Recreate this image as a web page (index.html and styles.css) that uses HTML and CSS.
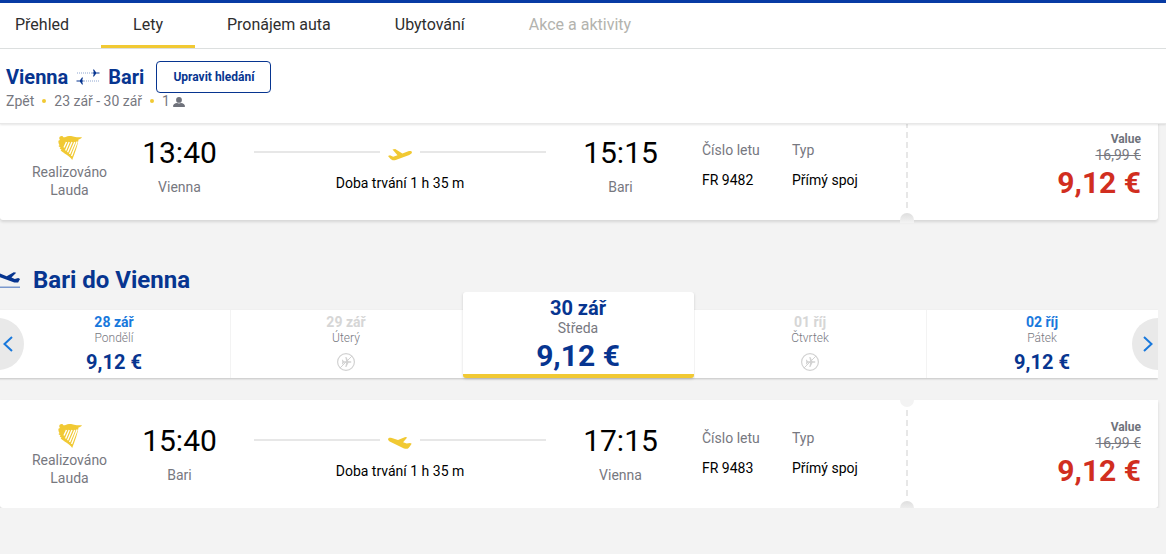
FILE: index.html
```
<!DOCTYPE html>
<html lang="cs">
<head>
<meta charset="utf-8">
<title>Lety Vienna – Bari</title>
<link rel="stylesheet" href="styles.css">
</head>
<body>
<svg class="sprites" aria-hidden="true">
  <symbol id="harp" viewBox="0 0 24 24">
    <path fill="currentColor" d="M2 .6C3.200-.4 5-.1 5.300 1.300 7.300 1.500 8.600.2 11 0c3.500-.2 5.500 1.600 13 1.300-1 1.400-2.200 1.900-3.500 2.300-.8 5.500-3.400 13.400-6.300 20.400C12 20 5.500 17.500 2.600 14.300l1-.6-2-1.100 1-.9L.4 9.900l1.100-.7C.5 7.500 0 5.700.7 4.500L2 3.900C1.100 3 .9 1.600 2 .6Z"/>
    <path fill="none" stroke="#fff" stroke-width="1.400" d="M8.500 6 6 11.500M11.200 6 7.600 14.500M14 6 9.600 16.200M16.800 6 11.600 18M19.200 5.600 13.600 20"/>
  </symbol>
  <symbol id="plane-up" viewBox="0 0 24 12">
    <path fill="currentColor" d="M4.500.6 7.200.1l7.200 4.400 5.900-2.200c1.700-.6 3.300-.2 3.600.7.300 1-.9 2.200-2.600 2.900L8.400 10.800c-1.800.7-3.500.7-4.300.3L2.600 10 0 6.900l2-.7 3.200 1.500 4.300-1.400Z"/>
  </symbol>
  <symbol id="plane-down" viewBox="0 0 24 12">
    <path fill="currentColor" d="M.1 1.900C.4.900 2 .5 3.800 1.100l6.200 2L17.300.1l1.900.3-4.100 4.800 3.600 1.200L22.100 6l1.600.7-2.300 3.200-1.100 1.300c-.9.8-2.500.8-4.300.2L2.700 5C1.100 4.300-.2 3 .1 1.900Z"/>
  </symbol>
  <symbol id="no-flight" viewBox="0 0 18 18">
    <g fill="none" stroke="currentColor"><circle cx="9" cy="9" r="8.400" stroke-width="1.200"/><path d="M3 15 15 3"/></g>
    <path fill="currentColor" d="m8.300 4 1.100.1 2.100 4.100 2.100.1c1 .2 1 1.200 0 1.400l-2.100.1-2.100 4.100-1.100.1.900-4.200-2.300-.1-1.200 1.600-.8.100.4-2.400-.4-2.400.8.100 1.200 1.600 2.300-.1Z"/>
  </symbol>
</svg>

<header class="header">
  <nav class="tabs">
    <a class="tab" href="#prehled">Přehled</a>
    <a class="tab tab--active" href="#lety" aria-current="page">Lety</a>
    <a class="tab" href="#auta">Pronájem auta</a>
    <a class="tab" href="#ubytovani">Ubytování</a>
    <a class="tab tab--disabled" aria-disabled="true">Akce a aktivity</a>
  </nav>
  <div class="search">
    <div class="search-route">
      <span class="city">Vienna</span>
      <svg class="swap" viewBox="0 0 24 16" aria-hidden="true">
        <path d="M1 4h17M6 12h17" fill="none" stroke="#8fa6d0" stroke-dasharray="1 1"/>
        <path d="m17 .5 1 .1L20.200 3.500l3.300.1v.8l-3.300.1L18 7.400l-1 .1.900-3h-1.400v-1h1.400ZM7 8.500l-1 .1-2.200 2.900-3.300.1v.8l3.300.1L6 15.400l1 .1-.9-3h1.400v-1H6.100Z" fill="#073590"/>
      </svg>
      <span class="city">Bari</span>
      <button class="edit" type="button">Upravit hledání</button>
    </div>
    <div class="search-info">
      <span>Zpět</span><i class="dot"></i><span>23 zář - 30 zář</span><i class="dot"></i>
      <span class="pax">1 <svg class="person" viewBox="0 0 12 10" aria-hidden="true"><circle cx="6" cy="2.900" r="2.900"/><path d="M0 9.200C0 7.300 1.900 6.300 4 6c1.300.6 2.700.6 4 0 2.100.3 4 1.300 4 3.200 0 .6-.4.8-1 .8H1c-.6 0-1-.2-1-.8Z"/></svg></span>
    </div>
  </div>
</header>

<main class="results">
  <article class="flight">
    <div class="details">
      <div class="airline"><svg class="harp"><use href="#harp"/></svg>Realizováno<br>Lauda</div>
      <div class="stop"><time class="time">13:40</time><span class="place">Vienna</span></div>
      <div class="journey">
        <div class="line"><svg class="plane"><use href="#plane-up"/></svg></div>
        <span class="duration">Doba trvání 1 h 35 m</span>
      </div>
      <div class="stop"><time class="time">15:15</time><span class="place">Bari</span></div>
      <dl class="facts">
        <div class="fact"><dt>Číslo letu</dt><dd>FR 9482</dd></div>
        <div class="fact"><dt>Typ</dt><dd>Přímý spoj</dd></div>
      </dl>
    </div>
    <div class="fare">
      <i class="perforation"></i>
      <span class="fare-name">Value</span>
      <s class="old-price">16,99 €</s>
      <strong class="price">9,12 €</strong>
    </div>
  </article>

  <h2 class="heading">
    <svg class="landing" viewBox="0 0 22 16" aria-hidden="true">
      <path fill="#073590" d="M0 1.200 7 4.200 14.500 0l2.500.4-5 5.100 3.500 1.400 3.600-1.100L21 7l-2 3.500h-4L0 5Z"/>
      <path fill="#3564b8" d="M0 15h21v1H0z"/>
    </svg>
    Bari do Vienna
  </h2>

  <div class="carousel">
    <button class="arrow arrow--prev" type="button" aria-label="Předchozí dny"><svg class="chevron" viewBox="0 0 10 16"><path d="M9 1 1.500 8 9 15"/></svg></button>
    <div class="days">
      <button class="day" type="button"><span class="date">28 zář</span><span class="weekday">Pondělí</span><span class="day-price">9,12 €</span></button>
      <button class="day day--empty" type="button"><span class="date">29 zář</span><span class="weekday">Úterý</span><svg class="none"><use href="#no-flight"/></svg></button>
      <button class="day day--selected" type="button"><span class="date">30 zář</span><span class="weekday">Středa</span><span class="day-price">9,12 €</span></button>
      <button class="day day--empty" type="button"><span class="date">01 říj</span><span class="weekday">Čtvrtek</span><svg class="none"><use href="#no-flight"/></svg></button>
      <button class="day" type="button"><span class="date">02 říj</span><span class="weekday">Pátek</span><span class="day-price">9,12 €</span></button>
    </div>
    <button class="arrow arrow--next" type="button" aria-label="Další dny"><svg class="chevron" viewBox="0 0 10 16"><path d="m1 1 7.500 7L1 15"/></svg></button>
  </div>

  <article class="flight">
    <div class="details">
      <div class="airline"><svg class="harp"><use href="#harp"/></svg>Realizováno<br>Lauda</div>
      <div class="stop"><time class="time">15:40</time><span class="place">Bari</span></div>
      <div class="journey">
        <div class="line"><svg class="plane"><use href="#plane-down"/></svg></div>
        <span class="duration">Doba trvání 1 h 35 m</span>
      </div>
      <div class="stop"><time class="time">17:15</time><span class="place">Vienna</span></div>
      <dl class="facts">
        <div class="fact"><dt>Číslo letu</dt><dd>FR 9483</dd></div>
        <div class="fact"><dt>Typ</dt><dd>Přímý spoj</dd></div>
      </dl>
    </div>
    <div class="fare">
      <i class="perforation"></i>
      <span class="fare-name">Value</span>
      <s class="old-price">16,99 €</s>
      <strong class="price">9,12 €</strong>
    </div>
  </article>
</main>
</body>
</html>
```
FILE: styles.css
```
* { box-sizing: border-box; }

body {
  margin: 0;
  background: #f3f3f3;
  color: #000;
  font: 14px/18px Roboto, "Liberation Sans", sans-serif;
  overflow-x: hidden;
}

button {
  border: 0;
  padding: 0;
  font-family: inherit;
  cursor: pointer;
}

.sprites { display: none; }

/* Header */
.header {
  position: relative;
  z-index: 2;
  background: #fff;
  border-top: 3px solid #073ba4;
  border-bottom: 1px solid #e8e8e8;
  box-shadow: 0 1px 2px rgba(0, 0, 0, .1);
}

.tabs {
  display: flex;
  padding-right: 16px;
  margin-left: -17px;
  border-bottom: 1px solid #dcdfdf;
}

.tab {
  padding: 10px 32px 8px;
  border-bottom: 3px solid transparent;
  color: #2e2e2e;
  font-size: 16px;
  line-height: 24px;
  text-decoration: none;
}

.tab--active { border-color: #f1c933; }
.tab--disabled { color: #b3b3ae; }

.search { padding: 12px 6px 14px; }

.search-route {
  display: flex;
  align-items: center;
}

.city {
  color: #073590;
  font-size: 20px;
  font-weight: 700;
  line-height: 24px;
}

.swap {
  width: 24px;
  height: 16px;
  margin: 0 8px;
}

.edit {
  height: 32px;
  margin-left: 12px;
  padding: 0 16px;
  border: 1px solid #073590;
  border-radius: 4px;
  background: #fff;
  color: #073590;
  font-size: 12px;
  font-weight: 700;
}

.search-info {
  display: flex;
  align-items: center;
  color: #77787f;
  line-height: 16px;
}

.dot {
  width: 4px;
  height: 4px;
  margin: 0 8px;
  border-radius: 50%;
  background: #f1c933;
}

.pax {
  display: flex;
  align-items: center;
  gap: 3px;
}

.person {
  width: 12px;
  height: 10px;
  margin-top: 2px;
  fill: #6f727b;
}

/* Flight card */
.results {
  margin-top: -12px;
  padding-right: 8px;
}

.flight {
  display: flex;
  background: #fff;
  border-radius: 0 0 3px 3px;
  box-shadow: 0 2px 3px rgba(0, 0, 0, .12);
}

.details {
  display: flex;
  flex: 1;
  padding: 24px 0 21px;
}

.airline {
  width: 139px;
  color: #77787f;
  text-align: center;
}

.harp {
  display: block;
  width: 24px;
  height: 24px;
  margin: 0 auto 3px;
  color: #f1c933;
}

.stop {
  display: flex;
  flex-direction: column;
  align-items: center;
  width: 81px;
}

.time {
  font-size: 30px;
  line-height: 34px;
}

.place {
  margin-top: 8px;
  color: #77787f;
}

.journey {
  flex: 1;
  margin: 0 34px;
  text-align: center;
}

.line {
  display: flex;
  align-items: center;
  gap: 8px;
  height: 32px;
}

.line::before,
.line::after {
  content: "";
  flex: 1;
  height: 2px;
  background: #e7e7e7;
}

.plane {
  width: 24px;
  height: 12px;
  margin-top: 5px;
  color: #f1c933;
}

.duration {
  display: block;
  margin-top: 6px;
}

.facts {
  display: flex;
  margin: 5px 0 0 41px;
}

.fact { width: 90px; }
.fact:last-child { width: 115px; }
.fact dt { color: #77787f; }
.fact dd { margin: 12px 0 0; }

.fare {
  position: relative;
  display: flex;
  flex-direction: column;
  align-items: flex-end;
  width: 251px;
  padding: 19px 17px 0 0;
  color: #77787f;
}

.perforation {
  position: absolute;
  top: 10px;
  bottom: 10px;
  left: -1px;
  width: 2px;
  background: repeating-linear-gradient(#e7e7e7 0 6px, transparent 6px 10px);
}

.fare::before,
.fare::after {
  content: "";
  position: absolute;
  left: -7px;
  width: 14px;
  background: #f3f3f3;
}

.fare::before {
  top: 0;
  height: 7px;
  border-radius: 0 0 7px 7px;
}

.fare::after {
  bottom: -3px;
  height: 10px;
  border-radius: 7px 7px 0 0;
  background: linear-gradient(#dedede, #f3f3f3);
}

.fare-name {
  color: #6f727b;
  font-size: 12px;
  font-weight: 700;
  line-height: 16px;
}

.old-price { line-height: 16px; }

.price {
  margin-top: 2px;
  color: #d12e1f;
  font-size: 30px;
  font-weight: 700;
  line-height: 36px;
}

.heading {
  display: flex;
  align-items: center;
  gap: 12px;
  margin: 44px 0 14px;
  color: #073590;
  font-size: 24px;
  font-weight: 700;
  line-height: 32px;
}

.landing {
  width: 21px;
  height: 16px;
}

/* Day carousel; the padding leaves room for the raised selected day */
.carousel {
  position: relative;
  margin: -18px 0 18px;
  padding: 18px 0 4px;
  overflow: hidden;
}

.days {
  display: flex;
  align-items: flex-end;
  height: 68px;
  margin-left: -2px;
  background: #fff;
  box-shadow: 0 1px 2px rgba(0, 0, 0, .2);
}

.day {
  display: flex;
  flex: 1;
  flex-direction: column;
  align-items: center;
  height: 68px;
  padding: 4px 1px 0 0;
  border-left: 1px solid #f3f3f3;
  background: #fff;
}

.date {
  color: #1878dc;
  font-size: 14px;
  font-weight: 700;
  line-height: 16px;
}

.weekday {
  color: #77787f;
  font-size: 12px;
  font-weight: 300;
  line-height: 16px;
}

.day-price {
  margin-top: 4px;
  color: #073590;
  font-size: 20px;
  font-weight: 700;
  line-height: 24px;
}

.day--empty .date { color: #d6d6d6; }

.none {
  width: 18px;
  height: 18px;
  margin-top: 7px;
  color: #d2d2d2;
}

.day--selected {
  height: 86px;
  margin-left: 1px;
  border-left: 0;
  border-bottom: 4px solid #f1c933;
  border-radius: 3px;
  box-shadow: 0 1px 3px rgba(0, 0, 0, .16);
}

.day--selected .date {
  color: #073590;
  font-size: 20px;
  line-height: 24px;
}

.day--selected .weekday {
  font-size: 14px;
  font-weight: 400;
}

.day--selected .day-price {
  margin-top: 2px;
  font-size: 30px;
  line-height: 36px;
}

.arrow {
  position: absolute;
  z-index: 1;
  top: 26px;
  display: flex;
  align-items: center;
  justify-content: center;
  width: 26px;
  height: 52px;
  background: #e9e9e9;
}

.arrow--prev {
  left: -2px;
  padding-right: 6px;
  border-radius: 0 26px 26px 0;
}

.arrow--next {
  right: 0;
  padding-left: 6px;
  border-radius: 26px 0 0 26px;
}

.chevron {
  width: 10px;
  height: 16px;
  fill: none;
  stroke: #1878dc;
  stroke-width: 2;
}
```
